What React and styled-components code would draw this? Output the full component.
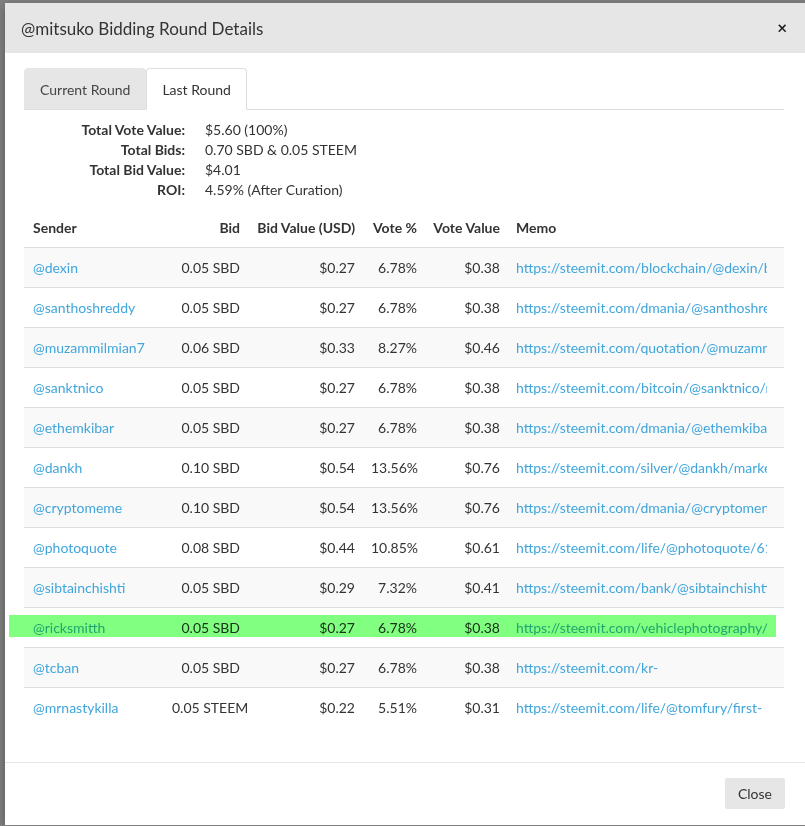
import styled, { createGlobalStyle } from 'styled-components'

const GlobalStyle = createGlobalStyle`
    html, body {
        margin: 0;
        padding: 0;
        background: #7f7f7f;
        overflow: hidden;
    }

    body {
        font-family: Lato, 'Liberation Sans', sans-serif;
        color: #333;
    }
`

const bids = [
    { sender: 'dexin', bid: '0.05 SBD', usd: '$0.27', pct: '6.78%', value: '$0.38', memo: 'https://steemit.com/blockchain/@dexin/b' },
    { sender: 'santhoshreddy', bid: '0.05 SBD', usd: '$0.27', pct: '6.78%', value: '$0.38', memo: 'https://steemit.com/dmania/@santhoshre' },
    { sender: 'muzammilmian7', bid: '0.06 SBD', usd: '$0.33', pct: '8.27%', value: '$0.46', memo: 'https://steemit.com/quotation/@muzamn' },
    { sender: 'sanktnico', bid: '0.05 SBD', usd: '$0.27', pct: '6.78%', value: '$0.38', memo: 'https://steemit.com/bitcoin/@sanktnico/r' },
    { sender: 'ethemkibar', bid: '0.05 SBD', usd: '$0.27', pct: '6.78%', value: '$0.38', memo: 'https://steemit.com/dmania/@ethemkiba' },
    { sender: 'dankh', bid: '0.10 SBD', usd: '$0.54', pct: '13.56%', value: '$0.76', memo: 'https://steemit.com/silver/@dankh/marke' },
    { sender: 'cryptomeme', bid: '0.10 SBD', usd: '$0.54', pct: '13.56%', value: '$0.76', memo: 'https://steemit.com/dmania/@cryptomen' },
    { sender: 'photoquote', bid: '0.08 SBD', usd: '$0.44', pct: '10.85%', value: '$0.61', memo: 'https://steemit.com/life/@photoquote/61' },
    { sender: 'sibtainchishti', bid: '0.05 SBD', usd: '$0.29', pct: '7.32%', value: '$0.41', memo: 'https://steemit.com/bank/@sibtainchishti,' },
    { sender: 'ricksmitth', bid: '0.05 SBD', usd: '$0.27', pct: '6.78%', value: '$0.38', memo: 'https://steemit.com/vehiclephotography/', marked: true },
    { sender: 'tcban', bid: '0.05 SBD', usd: '$0.27', pct: '6.78%', value: '$0.38', memo: 'https://steemit.com/kr-' },
    { sender: 'mrnastykilla', bid: '0.05 STEEM', usd: '$0.22', pct: '5.51%', value: '$0.31', memo: 'https://steemit.com/life/@tomfury/first-' },
]

const summary = [
    ['Total Vote Value:', '$5.60 (100%)'],
    ['Total Bids:', '0.70 SBD & 0.05 STEEM'],
    ['Total Bid Value:', '$4.01'],
    ['ROI:', '4.59% (After Curation)'],
]

const App = () => {
    return (
        <>
            <GlobalStyle />
            <Modal>
                <Header>
                    <Title>@mitsuko Bidding Round Details</Title>
                    <CloseX>×</CloseX>
                </Header>

                <Body>
                    <Tabs>
                        <Tab>Current Round</Tab>
                        <Tab active>Last Round</Tab>
                    </Tabs>

                    <Summary>
                        {summary.map(([label, value]) => (
                            <SummaryLine key={label}>
                                <SummaryLabel>{label}</SummaryLabel>
                                <span>{value}</span>
                            </SummaryLine>
                        ))}
                    </Summary>

                    <Table>
                        <colgroup>
                            <col style={{ width: 140 }} />
                            <col style={{ width: 84 }} />
                            <col style={{ width: 115 }} />
                            <col style={{ width: 62 }} />
                            <col style={{ width: 83 }} />
                            <col style={{ width: 276 }} />
                        </colgroup>
                        <thead>
                            <tr>
                                <Th>Sender</Th>
                                <Th right>Bid</Th>
                                <Th right>Bid Value (USD)</Th>
                                <Th right>Vote %</Th>
                                <Th right>Vote Value</Th>
                                <Th>Memo</Th>
                            </tr>
                        </thead>
                        <tbody>
                            {bids.map((b, i) => (
                                <Row key={b.sender} striped={i % 2 === 0}>
                                    <Td>
                                        {b.marked ? <Marker /> : null}
                                        <Link>@{b.sender}</Link>
                                    </Td>
                                    <Td right>{b.bid}</Td>
                                    <Td right>{b.usd}</Td>
                                    <Td right>{b.pct}</Td>
                                    <Td right>{b.value}</Td>
                                    <Td>
                                        <Memo>{b.memo}</Memo>
                                    </Td>
                                </Row>
                            ))}
                        </tbody>
                    </Table>
                </Body>

                <Footer>
                    <Button>Close</Button>
                </Footer>
            </Modal>
        </>
    )
}

export default App

const Modal = styled.div`
    margin: 3px 0 0 5px;
    width: 802px;
    background: #fff;
    box-shadow: 0 3px 9px rgba(0, 0, 0, 0.3);
`

const Header = styled.div`
    height: 50px;
    background: #e6e6e6;
    display: flex;
    align-items: center;
    justify-content: space-between;
    padding: 0 20px 0 16px;
`

const Title = styled.h4`
    margin: 0;
    font-size: 17px;
    font-weight: 400;
    color: #333;
`

const CloseX = styled.span`
    font-size: 17px;
    font-weight: 700;
    color: #222;
    line-height: 1;
    margin-top: -2px;
`

const Body = styled.div`
    padding: 15px 21px 35px 19px;
`

const Tabs = styled.div`
    display: flex;
    height: 41px;
    border-bottom: 1px solid #ddd;
    width: 760px;
`

const Tab = styled.div`
    display: flex;
    align-items: center;
    padding: 0 15px;
    font-size: 14px;
    color: ${p => p.active ? '#333' : '#444'};
    background: ${p => p.active ? '#fff' : '#e6e6e6'};
    border: 1px solid ${p => p.active ? '#ddd' : '#e6e6e6'};
    border-bottom-color: ${p => p.active ? '#fff' : '#ddd'};
    border-radius: 4px 4px 0 0;
    margin-bottom: -1px;
`

const Summary = styled.div`
    margin-top: 10px;
    font-size: 14px;
    line-height: 20px;
    color: #333;
`

const SummaryLine = styled.div`
    display: grid;
    grid-template-columns: 161px auto;
    column-gap: 20px;
`

const SummaryLabel = styled.span`
    text-align: right;
    font-weight: 700;
    color: #333;
`

const Table = styled.table`
    margin-top: 7px;
    width: 760px;
    table-layout: fixed;
    border-collapse: collapse;
    font-size: 14px;
`

const Th = styled.th`
    height: 40px;
    padding: 0 8px;
    text-align: ${p => p.right ? 'right' : 'left'};
    font-weight: 700;
    color: #333;
    white-space: nowrap;

    &:first-child {
        padding-left: 9px;
    }
`

const Row = styled.tr`
    position: relative;
    background: ${p => p.striped ? '#f9f9f9' : '#fff'};
    border-top: 1px solid #ddd;
`

const Td = styled.td`
    height: 39px;
    padding: 0 8px;
    text-align: ${p => p.right ? 'right' : 'left'};
    color: #333;
    white-space: nowrap;

    &:first-child {
        padding-left: 9px;
    }
`

const Link = styled.a`
    color: #41a6dc;
    text-decoration: none;
`

const Memo = styled(Link)`
    display: block;
    width: 251px;
    overflow: hidden;
`

const Marker = styled.div`
    position: absolute;
    left: -15px;
    right: 8px;
    top: 6px;
    height: 22px;
    background: #80ff80;
    mix-blend-mode: multiply;
    pointer-events: none;
`

const Footer = styled.div`
    border-top: 1px solid #e5e5e5;
    padding: 15px 22px 16px;
    display: flex;
    justify-content: flex-end;
`

const Button = styled.button`
    width: 60px;
    height: 31px;
    border: none;
    border-radius: 2px;
    background: #e6e6e6;
    color: #333;
    font-family: Lato, 'Liberation Sans', sans-serif;
    font-size: 14px;
`
